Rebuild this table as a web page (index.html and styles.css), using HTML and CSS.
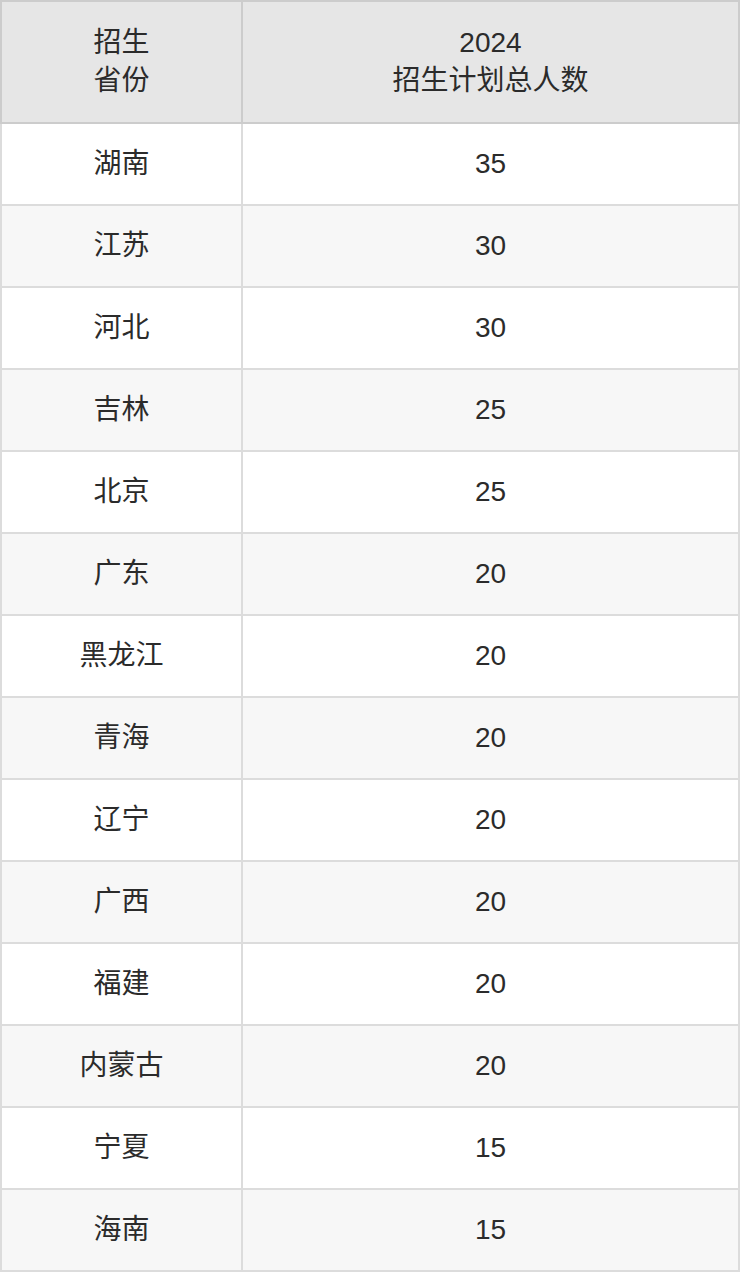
FILE: index.html
```html
<!DOCTYPE html>
<html lang="zh">
<head>
<meta charset="utf-8">
<link rel="stylesheet" href="styles.css">
</head>
<body>
<table class="plan">
  <thead>
    <tr><th class="c1">招生<br>省份</th><th class="c2">2024<br>招生计划总人数</th></tr>
  </thead>
  <tbody>
    <tr><td>湖南</td><td>35</td></tr>
    <tr><td>江苏</td><td>30</td></tr>
    <tr><td>河北</td><td>30</td></tr>
    <tr><td>吉林</td><td>25</td></tr>
    <tr><td>北京</td><td>25</td></tr>
    <tr><td>广东</td><td>20</td></tr>
    <tr><td>黑龙江</td><td>20</td></tr>
    <tr><td>青海</td><td>20</td></tr>
    <tr><td>辽宁</td><td>20</td></tr>
    <tr><td>广西</td><td>20</td></tr>
    <tr><td>福建</td><td>20</td></tr>
    <tr><td>内蒙古</td><td>20</td></tr>
    <tr><td>宁夏</td><td>15</td></tr>
    <tr><td>海南</td><td>15</td></tr>
  </tbody>
</table>
</body>
</html>
```

FILE: styles.css
```css
html, body {
  margin: 0;
  padding: 0;
  background: #ffffff;
}
.plan {
  width: 740px;
  border-collapse: collapse;
  table-layout: fixed;
  font-family: "Liberation Sans", "Noto Sans CJK SC", sans-serif;
  font-size: 28px;
  color: #2b2b2b;
  border: 2px solid #d9d9d9;
}
.plan th, .plan td {
  text-align: center;
  vertical-align: middle;
  padding: 0;
  font-weight: normal;
}
.plan th {
  background: #e6e6e6;
  height: 120px;
  line-height: 38px;
  border: 2px solid #cccccc;
}
.plan th.c1 { width: 239px; }
.plan td {
  height: 80px;
  line-height: 34px;
  border: 2px solid #dcdcdc;
}
.plan tbody tr:nth-child(even) td {
  background: #f7f7f7;
}
```
